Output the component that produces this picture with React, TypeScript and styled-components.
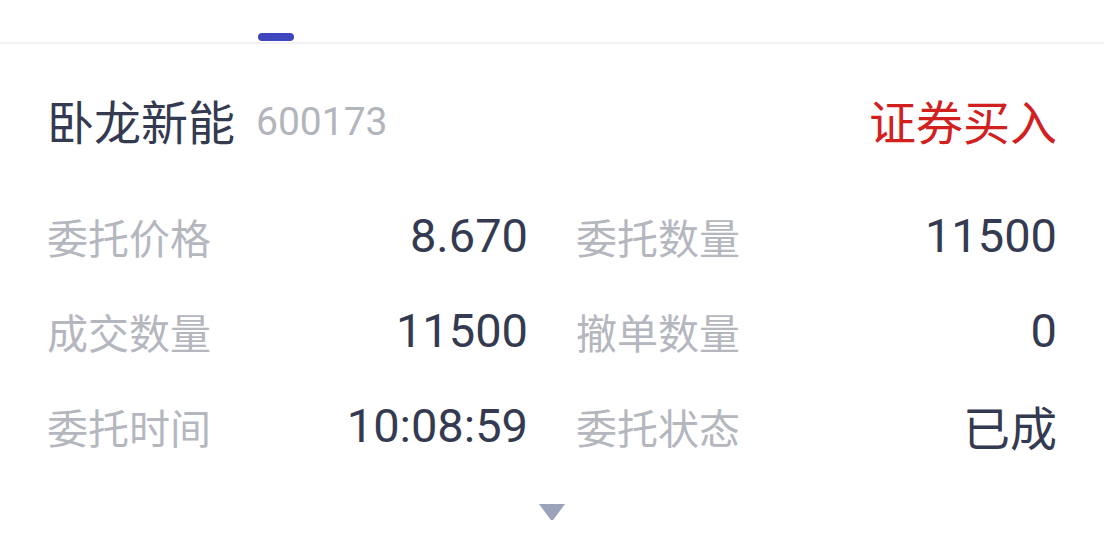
import styled, { createGlobalStyle } from 'styled-components'

const GlobalStyle = createGlobalStyle`
  html, body {
    margin: 0;
    padding: 0;
    background: #ffffff;
  }
  body {
    font-family: Roboto, "Noto Sans CJK SC", sans-serif;
  }
`

const Page = styled.div`
  width: 1104px;
  height: 544px;
  background: #ffffff;
  display: flex;
  flex-direction: column;
  overflow: hidden;
`

// 顶部 tab 区域
const TabBar = styled.div`
  height: 42px;
  border-bottom: 2px solid #f2f2f4;
  display: flex;
  align-items: flex-end;
  padding-left: 258px;
`

const Indicator = styled.div`
  width: 36px;
  height: 8px;
  border-radius: 4px;
  background: #3d46bd;
  margin-bottom: 1px;
`

const Card = styled.div`
  padding: 0 47px;
  display: flex;
  flex-direction: column;
`

const Header = styled.div`
  height: 162px;
  display: flex;
  align-items: center;
`

const Title = styled.span`
  font-family: "Noto Sans CJK SC", sans-serif;
  font-size: 47px;
  color: #343a50;
  margin-top: -12px;
`

const Code = styled.span`
  font-family: Roboto, sans-serif;
  font-size: 39px;
  color: #b3b5bd;
  margin-left: 21px;
  margin-top: -6px;
`

const Side = styled.span`
  margin-left: auto;
  font-family: "Noto Sans CJK SC", sans-serif;
  font-size: 47px;
  color: #d2201f;
  margin-top: -12px;
`

const Grid = styled.div`
  display: grid;
  grid-template-columns: 1fr 1fr;
  column-gap: 48px;
  grid-auto-rows: 95px;
  margin-top: -18px;
`

const Cell = styled.div`
  display: flex;
  align-items: center;
  justify-content: space-between;
`

const Label = styled.span`
  font-family: "Noto Sans CJK SC", sans-serif;
  font-size: 41px;
  color: #b5b7bf;
`

const Value = styled.span<{ $cjk?: boolean }>`
  font-family: ${(p) => (p.$cjk ? '"Noto Sans CJK SC", sans-serif' : 'Roboto, sans-serif')};
  font-size: 47px;
  color: #343a50;
`

const Toggle = styled.div`
  display: flex;
  justify-content: center;
  margin-top: 30px;
`

const rows: [string, string, boolean?][] = [
  ['委托价格', '8.670'],
  ['委托数量', '11500'],
  ['成交数量', '11500'],
  ['撤单数量', '0'],
  ['委托时间', '10:08:59'],
  ['委托状态', '已成', true],
]

const App = () => {
  return (
    <Page>
      <GlobalStyle />
      <TabBar>
        <Indicator />
      </TabBar>
      <Card>
        <Header>
          <Title>卧龙新能</Title>
          <Code>600173</Code>
          <Side>证券买入</Side>
        </Header>
        <Grid>
          {rows.map(([label, value, cjk]) => (
            <Cell key={label}>
              <Label>{label}</Label>
              <Value $cjk={cjk}>{value}</Value>
            </Cell>
          ))}
        </Grid>
        <Toggle>
          <svg width="28" height="18" viewBox="0 0 28 18">
            <path d="M1 1 H27 L15.5 16.5 Q14 18 12.5 16.5 Z" fill="#9aa3b8" />
          </svg>
        </Toggle>
      </Card>
    </Page>
  )
}

export default App
